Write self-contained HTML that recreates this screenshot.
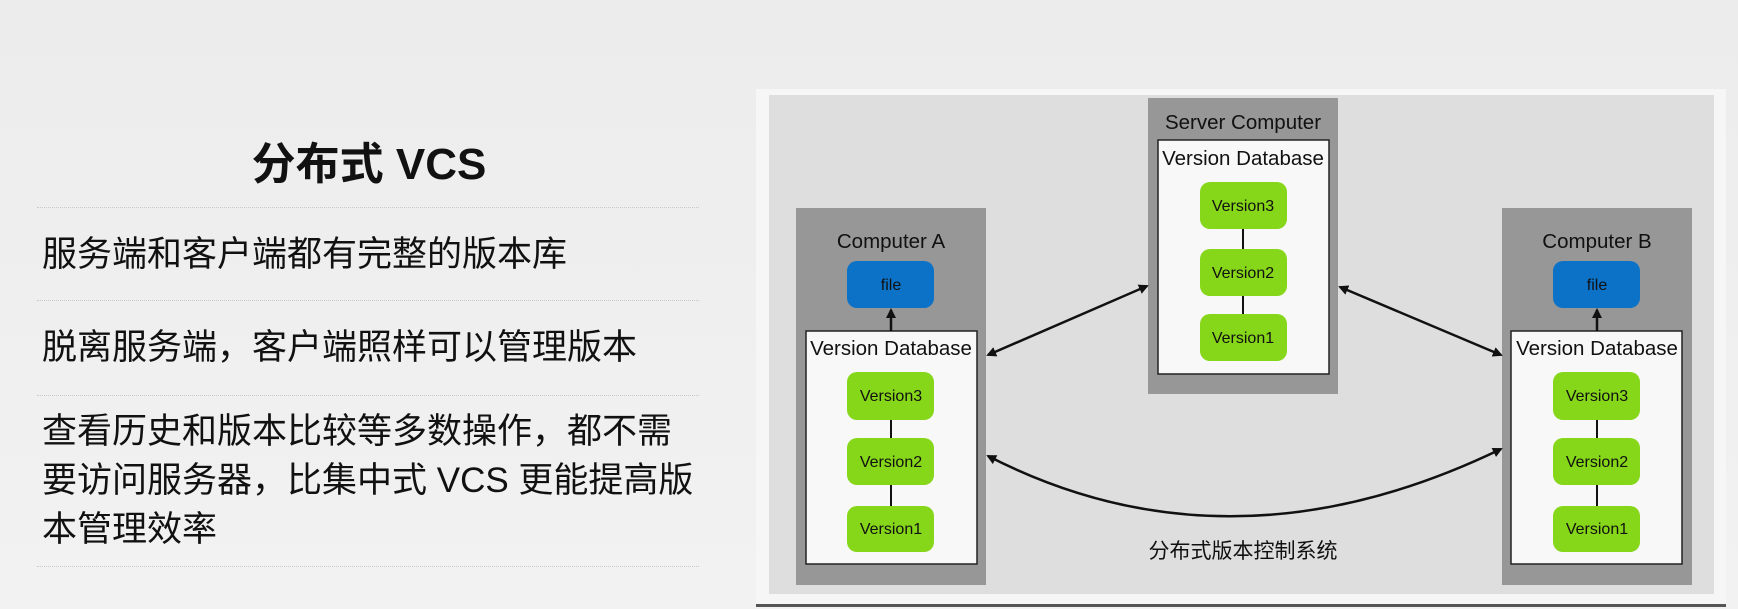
<!DOCTYPE html>
<html><head><meta charset="utf-8"><style>
body{margin:0;width:1738px;height:609px;overflow:hidden;background:linear-gradient(180deg,#ececec,#f2f2f2);font-family:"Liberation Sans","Noto Sans CJK SC",sans-serif;position:relative}
.a{position:absolute}
.t{left:0;width:738px;text-align:center;top:128px;font-size:44px;font-weight:bold;color:#111}
.hr{left:37px;width:662px;border-top:1px dotted #c8c8c8;height:0}
.p{left:42px;font-size:35px;color:#111;line-height:49px}
</style></head><body>
<div class="a t">分布式 VCS</div>
<div class="a hr" style="top:207px"></div>
<div class="a hr" style="top:300px"></div>
<div class="a hr" style="top:395px"></div>
<div class="a hr" style="top:566px"></div>
<div class="a p" style="top:230px">服务端和客户端都有完整的版本库</div>
<div class="a p" style="top:323px">脱离服务端，客户端照样可以管理版本</div>
<div class="a p" style="top:407px;width:700px">查看历史和版本比较等多数操作，都不需<br>要访问服务器，比集中式 VCS 更能提高版<br>本管理效率</div>
<svg class="a" style="left:0;top:0" width="1738" height="609" font-family="Liberation Sans, Noto Sans CJK SC, sans-serif">
<defs><marker id="ar" markerWidth="10" markerHeight="10" refX="8" refY="5" orient="auto-start-reverse" markerUnits="userSpaceOnUse"><path d="M0,0 L10,5 L0,10 z" fill="#111"/></marker></defs>
<rect x="756" y="89" width="970" height="517" fill="#f6f6f6"/>
<rect x="756" y="604" width="970" height="3" fill="#555"/>
<rect x="769" y="95" width="945" height="499" fill="#dedede"/>
<g font-size="20.5" fill="#111" text-anchor="middle">
<rect x="796" y="208" width="190" height="377" fill="#979797"/>
<text x="891" y="248">Computer A</text>
<rect x="806" y="331" width="171" height="233" fill="#f8f8f8" stroke="#222" stroke-width="1.5"/>
<text x="891" y="355">Version Database</text>
<rect x="1148" y="98" width="190" height="296" fill="#979797"/>
<text x="1243" y="129">Server Computer</text>
<rect x="1158" y="140" width="171" height="234" fill="#f8f8f8" stroke="#222" stroke-width="1.5"/>
<text x="1243" y="165">Version Database</text>
<rect x="1502" y="208" width="190" height="377" fill="#979797"/>
<text x="1597" y="248">Computer B</text>
<rect x="1511" y="331" width="171" height="233" fill="#f8f8f8" stroke="#222" stroke-width="1.5"/>
<text x="1597" y="355">Version Database</text>
</g>
<g stroke="#111" stroke-width="2">
<line x1="891" y1="420" x2="891" y2="506"/><line x1="1243" y1="229" x2="1243" y2="314"/><line x1="1597" y1="420" x2="1597" y2="506"/>
<line x1="891" y1="331" x2="891" y2="310" marker-end="url(#ar)" stroke-width="2.5"/>
<line x1="1597" y1="331" x2="1597" y2="310" marker-end="url(#ar)" stroke-width="2.5"/>
<line x1="988" y1="355" x2="1147" y2="286" marker-start="url(#ar)" marker-end="url(#ar)" stroke-width="2.5"/>
<line x1="1340" y1="287" x2="1501" y2="355" marker-start="url(#ar)" marker-end="url(#ar)" stroke-width="2.5"/>
<path d="M988,456 Q1230,580 1501,449" fill="none" marker-start="url(#ar)" marker-end="url(#ar)" stroke-width="2.5"/>
</g>
<g font-size="16" text-anchor="middle">
<rect x="847" y="261" width="87" height="47" rx="10" fill="#0b72c8"/><text x="891" y="290" fill="#111">file</text>
<rect x="1553" y="261" width="87" height="47" rx="10" fill="#0b72c8"/><text x="1597" y="290" fill="#111">file</text>
<g fill="#86d61a">
<rect x="847" y="372" width="87" height="48" rx="10"/><rect x="847" y="438" width="87" height="47" rx="10"/><rect x="847" y="506" width="87" height="46" rx="10"/>
<rect x="1200" y="182" width="87" height="47" rx="10"/><rect x="1200" y="249" width="87" height="47" rx="10"/><rect x="1200" y="314" width="87" height="47" rx="10"/>
<rect x="1553" y="372" width="87" height="48" rx="10"/><rect x="1553" y="438" width="87" height="47" rx="10"/><rect x="1553" y="506" width="87" height="46" rx="10"/>
</g>
<g fill="#111">
<text x="891" y="401">Version3</text><text x="891" y="467">Version2</text><text x="891" y="534">Version1</text>
<text x="1243" y="211">Version3</text><text x="1243" y="278">Version2</text><text x="1243" y="343">Version1</text>
<text x="1597" y="401">Version3</text><text x="1597" y="467">Version2</text><text x="1597" y="534">Version1</text>
</g>
<text x="1243" y="558" font-size="21" fill="#111">分布式版本控制系统</text>
</g>
</svg>
</body></html>
